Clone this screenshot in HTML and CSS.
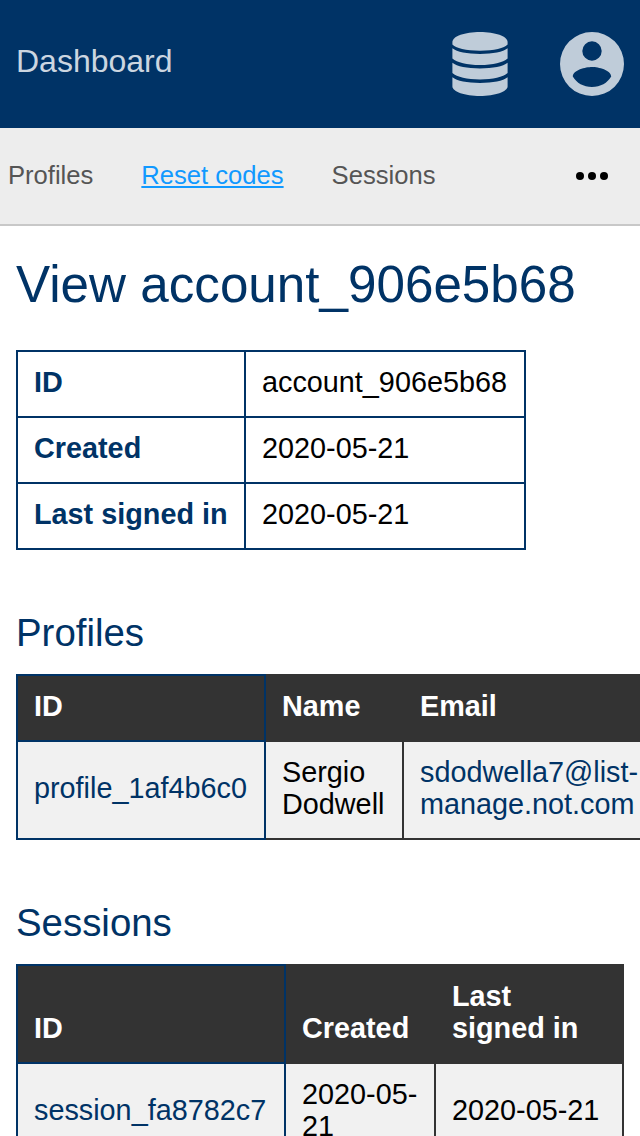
FILE: index.html
```html
<!DOCTYPE html>
<html lang="en">
<head>
<meta charset="utf-8">
<title>View account_906e5b68</title>
<link rel="stylesheet" href="styles.css">
</head>
<body>
<header class="header">
  <a class="brand">Dashboard</a>
  <div class="header-icons">
    <svg class="icon-database" viewBox="0 0 56 64" width="56" height="64">
      <path d="M28 0C43 0 55.600 4.200 55.600 10V12.500C52.500 16 42 18.700 28 18.700S3.500 16 .4 12.500V10C.4 4.200 13 0 28 0Z"/>
      <path d="M.4 16.200C5 19.800 15 21.900 28 21.900S51 19.800 55.600 16.200V26.500C51 30.600 41 33 28 33S5 30.600 .4 26.500Z"/>
      <path d="M.4 30.700C5 34.300 15 36.400 28 36.400S51 34.300 55.600 30.700V41C51 45.100 41 47.400 28 47.400S5 45.100 .4 41Z"/>
      <path d="M.4 45.200C5 48.800 15 50.900 28 50.900S51 48.800 55.600 45.200V54.500C55.600 59.500 43 64 28 64S.4 59.500 .4 54.500Z"/>
    </svg>
    <svg class="icon-account" viewBox="0 0 64 64" width="64" height="64">
      <path fill-rule="evenodd" d="M32 0A32 32 0 1 1 32 64A32 32 0 1 1 32 0ZM32 9.300A9.700 9.700 0 1 0 32 28.700A9.700 9.700 0 1 0 32 9.300ZM12.800 44.500C16.500 50.900 23.500 55 32 55S47.500 50.900 51.200 44.500C51 38 38.500 34.900 32 34.900S13 38 12.800 44.500Z"/>
    </svg>
  </div>
</header>
<nav class="nav">
  <div class="nav-links">
    <a class="nav-link">Profiles</a>
    <a class="nav-link nav-link-active">Reset codes</a>
    <a class="nav-link">Sessions</a>
  </div>
  <svg class="nav-more" viewBox="0 0 32 8" width="32" height="8">
    <circle cx="4" cy="4" r="4"/><circle cx="16" cy="4" r="4"/><circle cx="28" cy="4" r="4"/>
  </svg>
</nav>
<main class="content">
  <h1 class="title">View account_906e5b68</h1>
  <table class="table details">
    <colgroup><col class="details-label"><col class="details-value"></colgroup>
    <tbody>
      <tr><th>ID</th><td>account_906e5b68</td></tr>
      <tr><th>Created</th><td>2020-05-21</td></tr>
      <tr><th>Last signed in</th><td>2020-05-21</td></tr>
    </tbody>
  </table>
  <h2 class="subtitle">Profiles</h2>
  <table class="table records profiles">
    <colgroup><col class="profile-id"><col class="profile-name"><col class="profile-email"></colgroup>
    <thead><tr><th class="key">ID</th><th>Name</th><th>Email</th></tr></thead>
    <tbody><tr>
      <td class="key"><a class="link">profile_1af4b6c0</a></td>
      <td>Sergio<br>Dodwell</td>
      <td><a class="link">sdodwella7@list-<br>manage.not.com</a></td>
    </tr></tbody>
  </table>
  <h2 class="subtitle">Sessions</h2>
  <table class="table records sessions">
    <colgroup><col class="session-id"><col class="session-created"><col class="session-last"></colgroup>
    <thead><tr><th class="key">ID</th><th>Created</th><th>Last<br>signed in</th></tr></thead>
    <tbody><tr>
      <td class="key"><a class="link">session_fa8782c7</a></td>
      <td>2020-05-<br>21</td>
      <td>2020-05-21</td>
    </tr></tbody>
  </table>
</main>
</body>
</html>
```
FILE: styles.css
```css
* { box-sizing: border-box; }

body {
  margin: 0;
  height: 1136px;
  overflow: hidden;
  background: #fff;
  color: #000;
  font-family: "Liberation Sans", Arial, sans-serif;
}

.header {
  display: flex;
  justify-content: space-between;
  align-items: center;
  height: 128px;
  padding: 0 16px;
  background: #003366;
}

.brand {
  padding-bottom: 6px;
  color: #ccd6e0;
  font-size: 32px;
  line-height: 36px;
}

.header-icons {
  display: flex;
  gap: 52px;
  fill: #bfccd9;
}

.nav {
  display: flex;
  justify-content: space-between;
  align-items: center;
  height: 98px;
  padding: 0 32px 0 8px;
  border-bottom: 2px solid #c8c8c8;
  background: #ededed;
}

.nav-links {
  display: flex;
  gap: 48px;
  padding-bottom: 2px;
}

.nav-link {
  color: #555;
  font-size: 25.6px;
  line-height: 30px;
}

.nav-link-active {
  color: #1199ff;
  text-decoration: underline;
  text-decoration-thickness: 2px;
  text-underline-offset: 2px;
}

.content { padding: 29px 16px 0; }

.title {
  margin: 0 0 35px;
  color: #003366;
  font-size: 51.2px;
  font-weight: 400;
  line-height: 60px;
}

.subtitle {
  margin: 61px 0 19px;
  color: #003366;
  font-size: 38.4px;
  font-weight: 400;
  line-height: 44px;
}

.table {
  table-layout: fixed;
  border-collapse: collapse;
  font-size: 28.8px;
  line-height: 32px;
}

.table th,
.table td {
  padding: 14px 16px 18px;
  text-align: left;
  white-space: nowrap;
}

.details { width: 510px; }
.details-label { width: 228px; }
.details-value { width: 280px; }

.details th,
.details td { border: 2px solid #003366; }
.details th { color: #003366; }

.records th,
.records td { border: 2px solid #333; }

.records th {
  background: #333;
  color: #fff;
  vertical-align: bottom;
}

.records td { background: #f1f1f1; }

.records .key { border-color: #003366; }

.link { color: #003366; }

.profiles { width: 640px; }
.profile-id { width: 248px; }
.profile-name { width: 138px; }
.profile-email { width: 252px; }

.sessions { width: 608px; }
.session-id { width: 268px; }
.session-created { width: 150px; }
.session-last { width: 188px; }
```
